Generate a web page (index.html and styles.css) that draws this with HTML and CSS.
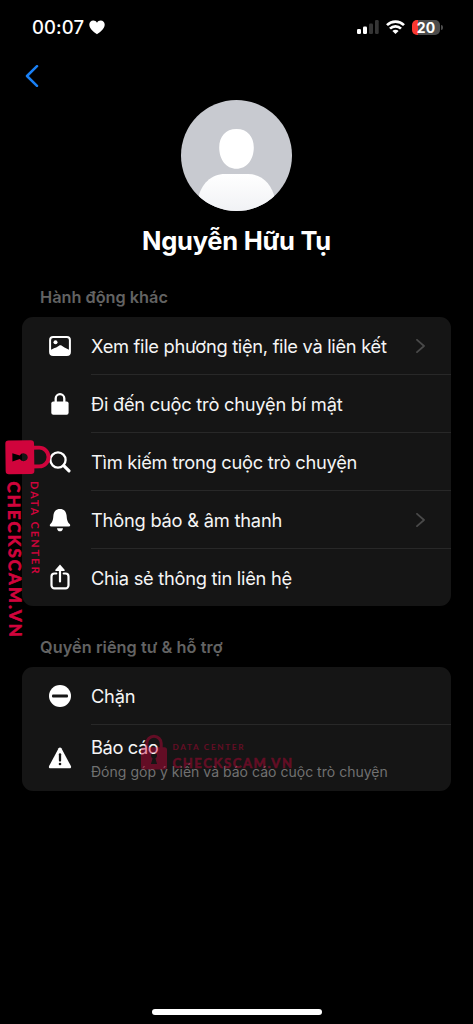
FILE: index.html
```html
<!DOCTYPE html>
<html lang="vi">
<head>
<meta charset="utf-8">
<title>Nguyễn Hữu Tụ</title>
<link rel="stylesheet" href="styles.css">
</head>
<body>
<div class="screen">
  <header class="status">
    <div class="clock"><span class="time">00:07</span>
      <svg width="16" height="15" viewBox="0 0 16 15"><path fill="#fff" d="M8 14.3C5.8 12.6.3 9.2.3 4.8.3 2.200 2 .5 4.300.5 6 .5 7.300 1.400 8 2.700 8.700 1.400 10 .5 11.700.5 14 .5 15.700 2.200 15.700 4.800 15.700 9.200 10.200 12.600 8 14.300z"/></svg>
    </div>
    <div class="indicators">
      <svg width="22" height="15" viewBox="0 0 22 15"><g fill="#fff"><rect x="0" y="9" width="4" height="5" rx="1.200"/><rect x="6" y="6.500" width="4" height="7.500" rx="1.200"/></g><g fill="#353535"><rect x="12" y="3.500" width="4" height="10.500" rx="1.200"/><rect x="18" y="0" width="3.700" height="14" rx="1.200"/></g></svg>
      <svg class="wifi" width="19" height="14" viewBox="0 0 19 14"><g fill="none" stroke="#fff" stroke-width="2.700"><path d="M1 5.100a12.200 12.200 0 0 1 17 0"/><path d="M4 8.600a7.900 7.900 0 0 1 11 0"/></g><path fill="#fff" d="M9.500 14 6.400 11a4.400 4.400 0 0 1 6.200 0z"/></svg>
      <div class="battery"><span>20</span></div><i class="battery-cap"></i>
    </div>
  </header>

  <nav class="nav"><svg width="14" height="22" viewBox="0 0 14 22"><path d="M12 1.200 2 11l10 9.800" fill="none" stroke="#1a80f5" stroke-width="2.500" stroke-linecap="round" stroke-linejoin="round"/></svg></nav>

  <section class="profile">
    <svg class="avatar" width="111" height="111" viewBox="0 0 111 111">
      <defs>
        <clipPath id="disc"><circle cx="55.500" cy="55.500" r="55.500"/></clipPath>
        <linearGradient id="body" x1="0" y1="0" x2="0" y2="1"><stop offset="0" stop-color="#fff"/><stop offset="1" stop-color="#f1f2f5"/></linearGradient>
      </defs>
      <g clip-path="url(#disc)"><rect width="111" height="111" fill="#c8cad0"/><path fill="#fff" d="M55.500 29c11 0 17.300 7.700 17.300 18.500 0 12-7 21.300-17.300 21.300s-17.300-9.300-17.300-21.300C38.200 36.700 44.500 29 55.500 29z"/><path fill="url(#body)" d="M17 111V99c3-15 13-25 27-25h23c14 0 24 10 27 25v12z"/></g>
    </svg>
    <h1 class="name">Nguyễn Hữu Tụ</h1>
  </section>

  <h2 class="heading heading-actions">Hành động khác</h2>
  <ul class="card">
    <li class="row"><span class="icon"><svg width="24" height="24" viewBox="0 0 24 24"><rect x="2.100" y="3.100" width="19.800" height="17.800" rx="3" fill="none" stroke="#fff" stroke-width="2"/><circle cx="7.500" cy="8.200" r="2" fill="#fff"/><path fill="#fff" d="M2 16.200 5.500 14.500c1.500-.9 2.500-.7 3.500-1.500l2-1.200c1-.6 1.800-.6 2.800 0l2.700 1.700c1 .7 2 .9 3 1.500l2.500 1.200V20l-1 1H3l-1-1z"/></svg></span>
      <div class="cell"><span class="label l1">Xem file phương tiện, file và liên kết</span><svg class="chevron" width="9" height="14" viewBox="0 0 9 14"><path d="m1 .8 7 6.200-7 6.200"/></svg></div></li>
    <li class="row"><span class="icon"><svg width="24" height="24" viewBox="0 0 24 24"><rect x="3.300" y="9.600" width="17.300" height="13.200" rx="2" fill="#fff"/><path d="M7.700 11V6.500a4.300 4.300 0 0 1 8.600 0V11" fill="none" stroke="#fff" stroke-width="2.300"/></svg></span>
      <div class="cell"><span class="label l2">Đi đến cuộc trò chuyện bí mật</span></div></li>
    <li class="row"><span class="icon"><svg width="24" height="24" viewBox="0 0 24 24"><circle cx="10" cy="10" r="7.600" fill="none" stroke="#fff" stroke-width="2.300"/><path d="m15.700 15.700 5.300 5.100" stroke="#fff" stroke-width="3.200" stroke-linecap="round"/></svg></span>
      <div class="cell"><span class="label l3">Tìm kiếm trong cuộc trò chuyện</span></div></li>
    <li class="row"><span class="icon"><svg width="24" height="24" viewBox="0 0 24 24"><path fill="#fff" d="M12 1c4 0 6.300 2.700 6.600 6.500.3 4.500.8 6.300 3 8.500 1 1 .8 2.600-.8 2.600H3.200c-1.600 0-1.800-1.600-.8-2.600 2.200-2.200 2.700-4 3-8.500C5.700 3.700 8 1 12 1zM9 20.200h6c-.2 1.900-1.300 3.100-3 3.100s-2.800-1.200-3-3.100z"/></svg></span>
      <div class="cell"><span class="label l4">Thông báo &amp; âm thanh</span><svg class="chevron" width="9" height="14" viewBox="0 0 9 14"><path d="m1 .8 7 6.200-7 6.200"/></svg></div></li>
    <li class="row row-last"><span class="icon"><svg width="24" height="28" viewBox="0 0 24 28"><path d="M8.300 9.500H6.500a3 3 0 0 0-3 3v8.800a3 3 0 0 0 3 3h11a3 3 0 0 0 3-3v-8.800a3 3 0 0 0-3-3h-1.800M12 17.500V4" fill="none" stroke="#fff" stroke-width="2.200" stroke-linecap="round"/><path fill="#fff" d="m12 .5 4.600 5.300c.4.600.2 1.100-.5 1.100H7.900c-.7 0-.9-.5-.5-1.100z"/></svg></span>
      <div class="cell"><span class="label l5">Chia sẻ thông tin liên hệ</span></div></li>
  </ul>

  <h2 class="heading heading-privacy">Quyền riêng tư &amp; hỗ trợ</h2>
  <ul class="card">
    <li class="row"><span class="icon"><svg width="24" height="24" viewBox="0 0 24 24"><circle cx="12" cy="12" r="11" fill="#fff"/><rect x="4" y="10.500" width="16" height="3" rx="1" fill="#151515"/></svg></span>
      <div class="cell"><span class="label l6">Chặn</span></div></li>
    <li class="row row-tall"><span class="icon"><svg width="24" height="24" viewBox="0 0 24 24"><path fill="#fff" d="M10.600 2.200c.6-1.100 2.200-1.100 2.800 0l9.500 17.900c.6 1.200 0 2.100-1.300 2.100H2.400c-1.300 0-1.900-.9-1.300-2.100z"/><path d="M12 8.300v6.200" stroke="#151515" stroke-width="2.300" stroke-linecap="round"/><circle cx="12" cy="18" r="1.300" fill="#151515"/></svg></span>
      <div class="cell stack"><span class="label l7">Báo cáo</span><span class="note">Đóng góp ý kiến và báo cáo cuộc trò chuyện</span></div></li>
  </ul>
  <div class="home-bar"></div>

  <svg class="stamps" width="473" height="1024" viewBox="0 0 473 1024">
    <defs>
      <g id="stamp">
        <path fill-rule="evenodd" d="M2.500 12.300h21a2.500 2.500 0 0 1 2.500 2.500v17.100a2.500 2.500 0 0 1-2.500 2.500h-21A2.500 2.500 0 0 1 0 31.900V14.800a2.500 2.500 0 0 1 2.500-2.500zM13 17.300a3.300 3.300 0 0 0-1.400 6.100l-1.700 5.700h6.200l-1.700-5.700A3.300 3.300 0 0 0 13 17.300z"/>
        <path d="M5.800 14V8.500a7.200 7.200 0 0 1 14.400 0V14" fill="none" stroke="#d0043c" stroke-width="3"/>
        <text class="stamp-small" x="31.500" y="15.400" textLength="71">DATA CENTER</text>
        <text class="stamp-big" x="31.500" y="33" textLength="119.500">CHECKSCAM.VN</text>
      </g>
    </defs>
    <g fill="#d0043c">
      <use href="#stamp" transform="translate(50 440) rotate(89.300) scale(1.300)"/>
      <use href="#stamp" opacity=".42" transform="translate(141 735)"/>
    </g>
  </svg>
</div>
</body>
</html>
```
FILE: styles.css
```css
* { box-sizing: border-box; }
body { margin: 0; background: #000; color: #fff; font-family: Inter, "Noto Sans", sans-serif; }
.screen { position: relative; width: 473px; height: 1024px; overflow: hidden; display: flex; flex-direction: column; }
svg { display: block; flex: none; }
.status { height: 54px; padding: 0 30px 0 32px; display: flex; align-items: center; justify-content: space-between; }
.clock { display: flex; align-items: center; gap: 5px; }
.time { font-size: 18.500px; font-weight: 550; line-height: 24px; letter-spacing: .1px; }
.indicators { display: flex; align-items: center; }
.wifi { margin: 0 7px; }
.battery { width: 28px; height: 15px; border-radius: 5px; background: linear-gradient(90deg, #fa3830 6px, #4c4c4c 6px); font-size: 14px; font-weight: 700; line-height: 15px; text-align: center; }
.battery-cap { width: 2px; height: 5px; margin-left: 1px; border-radius: 0 2px 2px 0; background: #4c4c4c; }
.nav { height: 46px; padding: 11px 0 0 25px; }
.profile { display: flex; flex-direction: column; align-items: center; }
.name { margin: 12px 0 0; font-size: 25.500px; line-height: 36px; font-weight: 650; letter-spacing: -.25px; white-space: nowrap; }
.heading { margin: 0 0 0 40px; font-size: 16.300px; line-height: 20px; font-weight: 600; color: #636363; white-space: nowrap; align-self: flex-start; }
.heading-actions { margin-top: 28px; margin-bottom: 10px; }
.heading-privacy { margin-top: 31px; margin-bottom: 10px; letter-spacing: .06px; }
.card { margin: 0 22px; padding: 0; list-style: none; background: #151515; border-radius: 11px; }
.row { height: 58px; display: flex; padding-left: 25px; }
.row-last { height: 57px; }
.icon { width: 25px; display: flex; align-items: center; justify-content: center; }
.cell { flex: 1; margin-left: 19px; display: flex; align-items: center; justify-content: space-between; padding: 0 26px 0 0; border-bottom: 1px solid #282828; }
.row:last-child .cell { border-bottom: 0; }
.row-tall { height: 66px; }
.stack { flex-direction: column; align-items: flex-start; justify-content: flex-start; padding: 10px 0 0; }
.label { font-size: 18.300px; line-height: 24px; font-weight: 400; white-space: nowrap; color: #f5f5f5; }
.l1 { letter-spacing: -.3px; }
.l2, .l6 { letter-spacing: -.25px; }
.l3, .l5 { letter-spacing: -.27px; }
.l4 { letter-spacing: -.22px; }
.l7 { letter-spacing: -.4px; }
.note { margin-top: 1px; font-size: 14px; line-height: 24px; color: #717171; white-space: nowrap; letter-spacing: .02px; }
.chevron path { fill: none; stroke: #494949; stroke-width: 1.800; stroke-linecap: round; stroke-linejoin: round; }
.home-bar { width: 170px; height: 6px; border-radius: 3px; background: #fff; margin: auto auto 9px 152px; }
.stamps { position: absolute; inset: 0; pointer-events: none; }
.stamp-small { font: 700 8.200px Lato, sans-serif; }
.stamp-big { font: 700 13px Lato, sans-serif; stroke: #d0043c; stroke-width: .5px; }
```
